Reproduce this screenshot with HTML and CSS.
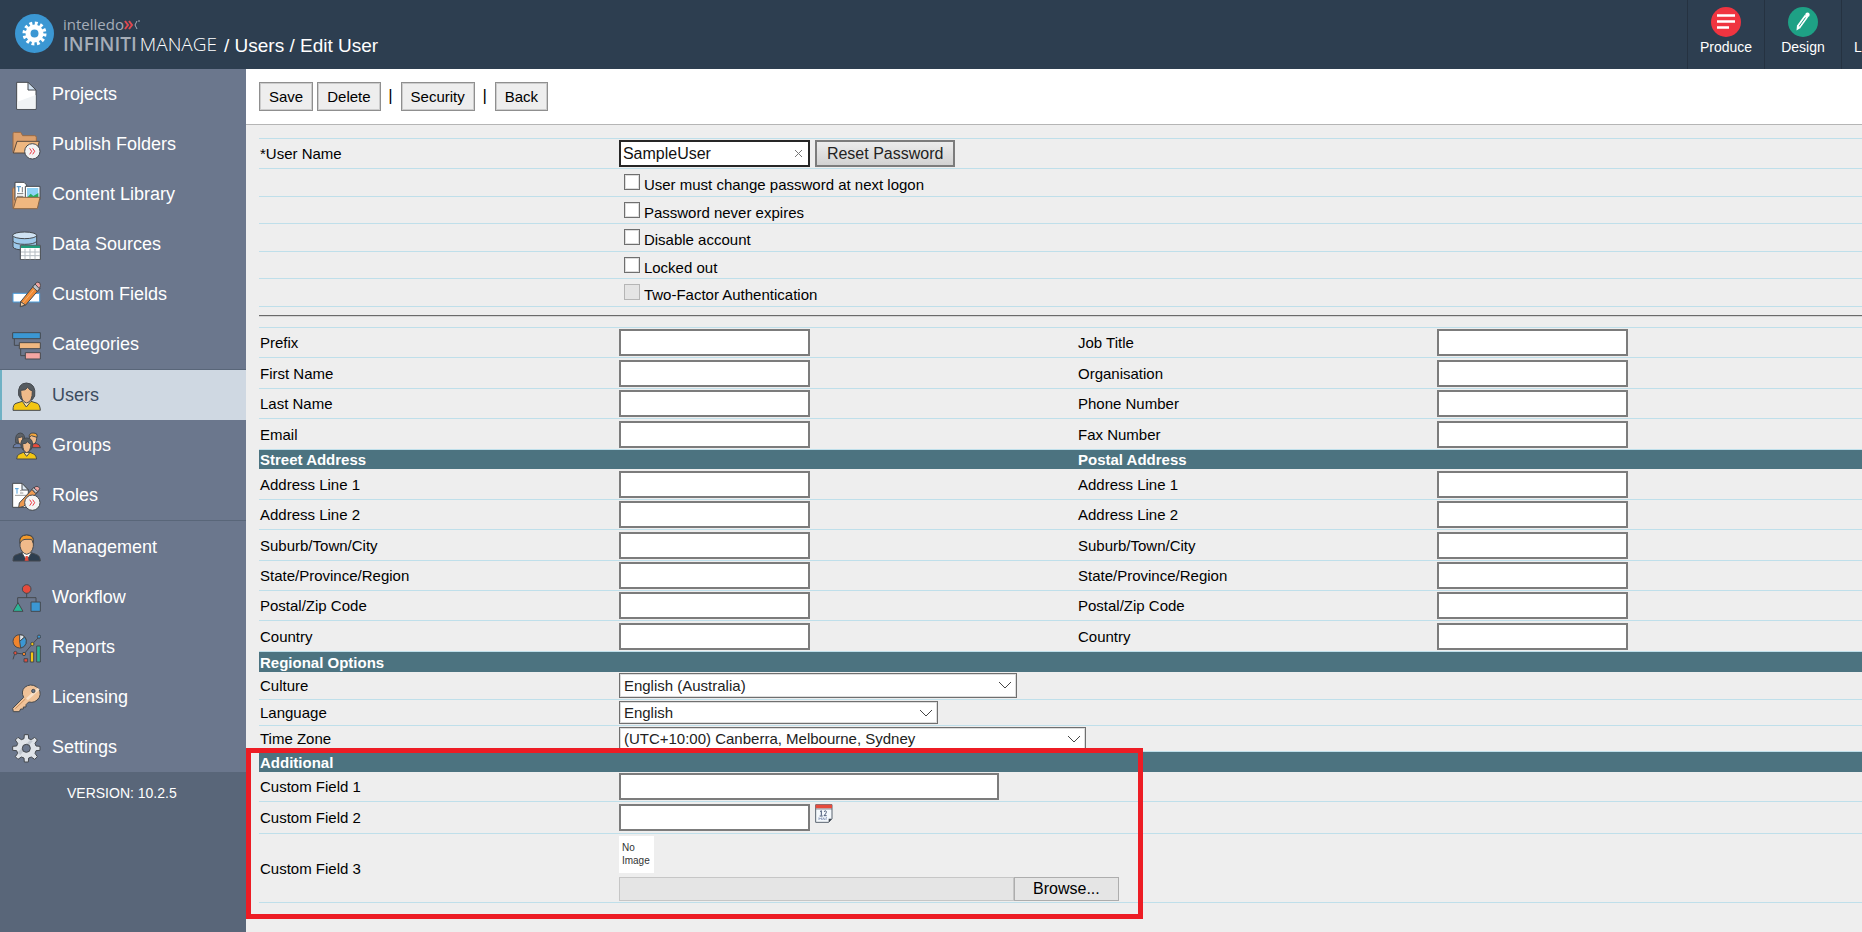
FILE: index.html
```html
<!DOCTYPE html>
<html lang="en">
<head>
    <meta charset="utf-8">
    <title>Edit User</title>
    <link rel="stylesheet" href="styles.css">
</head>
<body>
    <header class="topbar">
        <svg class="brand-icon" viewBox="0 0 39 39">
            <circle cx="19.5" cy="19.5" r="19.5" fill="#3b97d3"/>
            <circle cx="19.5" cy="19.5" r="10" fill="none" stroke="#fff" stroke-width="4" stroke-dasharray="2.8 2.436"/>
            <circle cx="19.5" cy="19.5" r="6.5" fill="none" stroke="#fff" stroke-width="5"/>
        </svg>
        <div class="brand">
            <div class="brand-top">intelledo<svg class="brand-x" viewBox="0 0 16 10">
                <path d="M1 1l3 4-3 4M5 1l3 4-3 4" fill="none" stroke="#e0494f" stroke-width="2"/>
                <path d="M13 1l-2 4 2 4M14 1h2" fill="none" stroke="#a5adb8"/>
            </svg></div>
            <div class="brand-name"><b>INFINITI</b><span>MANAGE</span></div>
        </div>
        <div class="crumbs">/ <a href="#">Users</a> / Edit User</div>
        <nav class="apps">
            <a href="#">
                <svg viewBox="0 0 30 30">
                    <circle cx="15" cy="15" r="15" fill="#f03440"/>
                    <path d="M6 8.5h18M6 14.500h18M6 20.500h12" stroke="#fff" stroke-width="2.700"/>
                </svg>
                Produce
            </a>
            <a href="#">
                <svg viewBox="0 0 30 30">
                    <circle cx="15" cy="15" r="15" fill="#1ea185"/>
                    <path d="M10.500 20L18.500 9" stroke="#fff" stroke-width="4"/>
                    <path d="M11 19.500L17.500 10.500" stroke="#1ea185" stroke-width="1"/>
                    <path d="M9 18L8.500 23.500L12.500 21Z" fill="#fff"/>
                    <circle cx="19.500" cy="7.800" r="2.200" fill="#fff"/>
                </svg>
                Design
            </a>
            <a href="#" class="last">L</a>
        </nav>
    </header>

    <div class="layout">
        <aside class="sidebar">
            <nav>
                <ul>
                    <li><a href="#">
                        <svg viewBox="0 0 87 87"><path d="M14 4H48L72 27V85H14Z" fill="#fff"/><path d="M16 62L71 42V83H16Z" fill="#f0f3f5" stroke="none"/><path d="M48 4V27H72Z" fill="#d3e3f3"/></svg>
                        Projects</a></li>
                    <li><a href="#">
                        <svg viewBox="0 0 87 87"><path d="M3 65V8q0-4 4-4H26L32 14H68q5 0 5 5V62Z" fill="#dca06d" stroke="#9c6b45"/><path d="M15 31H82L72 66H4Z" fill="#efb780" stroke="#5b4a3e"/><circle cx="61" cy="61" r="23" fill="#f3f3f3"/><path d="M53 52l6 9-6 9M62 52l6 9-6 9" fill="none" stroke="#f03440"/></svg>
                        Publish Folders</a></li>
                    <li><a href="#">
                        <svg viewBox="0 0 87 87"><path d="M2 24Q2 19 10 20V78L3 82Z" fill="#dca06d" stroke="#9c6b45"/><path d="M9 4H36L44 12V58H9Z" fill="#fff"/><path d="M14 17H27M20 17V32" stroke="#5d9fd0" stroke-width="4"/><path d="M15 38H34M15 46H34M31 18V34" stroke="#777"/><path d="M40 16H84V56H40Z" fill="#fff"/><path d="M45 21H79V48H45Z" fill="#8ed2f5" stroke="none"/><path d="M45 50L56 38L64 45L79 36V50Z" fill="#27ae60" stroke="none"/><path d="M14 49H84L76 83H4Z" fill="#efb780" stroke="#8a6544"/></svg>
                        Content Library</a></li>
                    <li><a href="#">
                        <svg viewBox="0 0 87 87"><path d="M3 13V48Q8 57 38 57Q68 57 74 48V13Z" fill="#9dc9ea"/><path d="M3 31Q10 40 38 40Q66 40 74 31" fill="none"/><ellipse cx="38" cy="13" rx="36" ry="10" fill="#cfe2f2"/><path d="M25 43H85V86H25Z" fill="#fff"/><path d="M27 44H84V51H27Z" fill="#1e9e7c" stroke="none"/><path d="M27 63H84M27 74H84M39 53V85M54 53V85M69 53V85" stroke="#b5bcc2"/></svg>
                        Data Sources</a></li>
                    <li><a href="#">
                        <svg viewBox="0 0 87 87"><path d="M3 37H83V63H3Z" fill="#fff" stroke="#4a9ddb"/><path d="M26 62L67 12L82 24L41 72L25 77Z" fill="#ee8a35"/><path d="M32 67L72 19" stroke="#f8b16e"/><path d="M26 62L25 77L40 72Z" fill="#efc79b"/><path d="M62 18L69 9L85 21L76 31Z" fill="#bfc5cb"/><path d="M69 9Q75 0 83 5Q89 13 82 23Z" fill="#f0a3a0"/></svg>
                        Custom Fields</a></li>
                    <li><a href="#">
                        <svg viewBox="0 0 87 87"><path d="M7 22V43H22M26 53V74H40" fill="none"/><path d="M2 5H85V23H2Z" fill="#3b97d3"/><path d="M22 35H85V53H22Z" fill="#efb780"/><path d="M40 65H85V84H40Z" fill="#f4a6a2"/></svg>
                        Categories</a></li>
                    <li class="active"><a href="#">
                        <svg viewBox="0 0 87 87"><path d="M3 85Q3 66 12 64L31 58H57L76 64Q84 68 85 85Z" fill="#f3c613"/><path d="M31 58L43 75L57 58V48H31Z" fill="#f8e3b0"/><path d="M20 40Q16 4 43 3Q73 4 68 42L61 53H28Z" fill="#555b60"/><path d="M26 25Q42 26 47 16Q53 26 61 26Q62 59 44 63Q26 59 26 25Z" fill="#f0ba8a"/></svg>
                        Users</a></li>
                    <li><a href="#">
                        <svg viewBox="0 0 87 87"><path d="M3 47Q4 36 13 35H35V47Z" fill="#6c7fa8"/><path d="M52 47V35H74Q84 37 85 47Z" fill="#e64b3c"/><path d="M11 32Q8 4 25 3Q41 3 38 35Z" fill="#5d6167"/><path d="M18 16Q26 18 32 13Q34 35 25 37Q17 34 18 16Z" fill="#f0ba8a"/><path d="M52 10Q60 1 74 6Q76 35 64 36Q53 34 52 10Z" fill="#f0ba8a"/><path d="M52 16Q50 3 63 3Q78 3 75 16L58 11Z" fill="#f4a53a"/><path d="M14 81Q14 68 23 66L34 61H54L65 66Q73 69 74 81Z" fill="#f3c613"/><path d="M35 61L44 73L54 61Z" fill="#f8e3b0"/><path d="M27 43Q24 18 44 18Q64 18 62 43L56 54H33Z" fill="#555b60"/><path d="M32 35Q43 36 47 29Q51 36 57 36Q56 59 44 62Q32 59 32 35Z" fill="#f0ba8a"/></svg>
                        Groups</a></li>
                    <li><a href="#">
                        <svg viewBox="0 0 87 87"><path d="M2 4H30L49 23V76H2Z" fill="#fff"/><path d="M30 4V24H49Z" fill="#dce8f3"/><path d="M9 20H20M15 20V35" stroke="#4a9ddb"/><path d="M9 40H45M24 26H30M24 33H34" stroke="#999"/><path d="M22 63L65 17L78 29L35 73L20 77Z" fill="#ee9a50"/><path d="M60 22L72 13Q80 12 83 19L79 29L71 34Z" fill="#f0a3a0"/><path d="M60 22L65 17L78 29L71 34Z" fill="#bfc5cb"/><circle cx="61" cy="62" r="23" fill="#f3f3f3"/><path d="M53 53l6 9-6 9M62 53l6 9-6 9" fill="none" stroke="#f03440"/></svg>
                        Roles</a></li>
                </ul>
                <ul class="admin">
                    <li><a href="#">
                        <svg viewBox="0 0 87 87"><path d="M3 81Q3 63 14 62L30 56H58L74 62Q84 65 85 81Z" fill="#2d3e50"/><path d="M30 57L44 80L58 57L53 49H35Z" fill="#fff"/><path d="M41 66H47L50 80H38Z" fill="#e64b3c" stroke="none"/><path d="M24 20Q22 3 45 3Q66 3 64 20V37Q61 57 44 61Q28 57 24 37Z" fill="#f0ba8a"/><path d="M24 28Q20 4 44 3Q68 4 64 28L59 16H42Q29 16 24 28Z" fill="#f49a2a"/></svg>
                        Management</a></li>
                    <li><a href="#">
                        <svg viewBox="0 0 87 87"><path d="M44 26V41M17 58V41H72V58" fill="none"/><circle cx="44" cy="15" r="13" fill="#e64b3c"/><path d="M18 56L33 82H3Z" fill="#2bb596"/><path d="M57 54H85V82H57Z" fill="#3b97d3"/></svg>
                        Workflow</a></li>
                    <li><a href="#">
                        <svg viewBox="0 0 87 87"><circle cx="23" cy="22" r="20" fill="#f0842c"/><path d="M23 2A20 20 0 0 1 38 9L23 22Z" fill="#dfe5ea"/><path d="M23 22L38 9A20 20 0 0 1 26 42Z" fill="#3b97d3"/><path d="M3 76L9 57L36 60L61 30L81 9" fill="none"/><circle cx="10" cy="57" r="5" fill="#e64b3c"/><circle cx="36" cy="60" r="5" fill="#f0842c"/><circle cx="61" cy="30" r="5" fill="#f3c613"/><circle cx="81" cy="8" r="5" fill="#3b97d3"/><path d="M36 74H47V84H36Z" fill="#e64b3c"/><path d="M55 54H65V84H55Z" fill="#f3c613"/><path d="M74 36H85V84H74Z" fill="#2bb596"/></svg>
                        Reports</a></li>
                    <li><a href="#">
                        <svg viewBox="0 0 87 87"><path d="M35 40Q26 23 38 10Q55-3 73 8Q90 22 82 40Q70 59 50 54L42 62V69H34V75H26L22 83H4L2 73Z" fill="#f0c298"/><path d="M10 74L40 45" stroke="#c98f5e"/><path d="M45 46L80 14" stroke="#f9e0c7" stroke-width="8"/><circle cx="64" cy="21" r="5" fill="#6b778d"/></svg>
                        Licensing</a></li>
                    <li><a href="#">
                        <svg viewBox="0 0 87 87"><path d="M36 14L37 2H49L50 14L58 17L68 10L76 18L69 28L72 36L84 37V49L72 50L69 58L76 68L68 76L58 69L50 72L49 84H37L36 72L28 69L18 76L10 68L17 58L14 50L2 49V37L14 36L17 28L10 18L18 10L28 17Z" fill="#dfe3e8"/><path d="M18 54L55 18L62 22L24 64Z" fill="#c3c9d1" stroke="none"/><circle cx="43" cy="43" r="12" fill="#6b778d"/></svg>
                        Settings</a></li>
                </ul>
            </nav>
            <div class="version">VERSION: 10.2.5</div>
        </aside>

        <main class="content">
            <div class="toolbar">
                <button type="button">Save</button>
                <button type="button">Delete</button>
                <span class="sep">|</span>
                <button type="button">Security</button>
                <span class="sep">|</span>
                <button type="button">Back</button>
            </div>

            <form class="user-form">
                <section class="account">
                    <div class="row">
                        <label for="username">*User Name</label>
                        <div class="field">
                            <div class="clearable">
                                <input type="text" id="username" class="focused" value="SampleUser">
                                <button type="button" class="clear" aria-label="Clear"><svg viewBox="0 0 9 9"><path d="M1 1L8 8M8 1L1 8" stroke="#777" fill="none"/></svg></button>
                            </div>
                            <button type="button" class="reset">Reset Password</button>
                        </div>
                    </div>
                    <div class="row check"><label><input type="checkbox"><span>User must change password at next logon</span></label></div>
                    <div class="row check"><label><input type="checkbox"><span>Password never expires</span></label></div>
                    <div class="row check"><label><input type="checkbox"><span>Disable account</span></label></div>
                    <div class="row check"><label><input type="checkbox"><span>Locked out</span></label></div>
                    <div class="row check"><label><input type="checkbox" disabled><span>Two-Factor Authentication</span></label></div>
                </section>

                <hr>

                <section class="details">
                    <div class="row">
                        <label for="prefix">Prefix</label><input type="text" id="prefix">
                        <label for="job">Job Title</label><input type="text" id="job">
                    </div>
                    <div class="row">
                        <label for="first">First Name</label><input type="text" id="first">
                        <label for="org">Organisation</label><input type="text" id="org">
                    </div>
                    <div class="row">
                        <label for="lastname">Last Name</label><input type="text" id="lastname">
                        <label for="phone">Phone Number</label><input type="text" id="phone">
                    </div>
                    <div class="row">
                        <label for="email">Email</label><input type="text" id="email">
                        <label for="fax">Fax Number</label><input type="text" id="fax">
                    </div>
                </section>

                <section class="address">
                    <div class="heading"><h2>Street Address</h2><h2>Postal Address</h2></div>
                    <div class="row">
                        <label for="s1">Address Line 1</label><input type="text" id="s1">
                        <label for="p1">Address Line 1</label><input type="text" id="p1">
                    </div>
                    <div class="row">
                        <label for="s2">Address Line 2</label><input type="text" id="s2">
                        <label for="p2">Address Line 2</label><input type="text" id="p2">
                    </div>
                    <div class="row">
                        <label for="s3">Suburb/Town/City</label><input type="text" id="s3">
                        <label for="p3">Suburb/Town/City</label><input type="text" id="p3">
                    </div>
                    <div class="row">
                        <label for="s4">State/Province/Region</label><input type="text" id="s4">
                        <label for="p4">State/Province/Region</label><input type="text" id="p4">
                    </div>
                    <div class="row">
                        <label for="s5">Postal/Zip Code</label><input type="text" id="s5">
                        <label for="p5">Postal/Zip Code</label><input type="text" id="p5">
                    </div>
                    <div class="row">
                        <label for="s6">Country</label><input type="text" id="s6">
                        <label for="p6">Country</label><input type="text" id="p6">
                    </div>
                </section>

                <section class="regional">
                    <div class="heading"><h2>Regional Options</h2></div>
                    <div class="row culture">
                        <label for="culture">Culture</label>
                        <div class="select">
                            <select id="culture"><option>English (Australia)</option></select>
                            <svg viewBox="0 0 14 8"><path d="M1 1L7 7L13 1"/></svg>
                        </div>
                    </div>
                    <div class="row language">
                        <label for="language">Language</label>
                        <div class="select">
                            <select id="language"><option>English</option></select>
                            <svg viewBox="0 0 14 8"><path d="M1 1L7 7L13 1"/></svg>
                        </div>
                    </div>
                    <div class="row timezone">
                        <label for="timezone">Time Zone</label>
                        <div class="select">
                            <select id="timezone"><option>(UTC+10:00) Canberra, Melbourne, Sydney</option></select>
                            <svg viewBox="0 0 14 8"><path d="M1 1L7 7L13 1"/></svg>
                        </div>
                    </div>
                </section>

                <section class="additional">
                    <div class="heading"><h2>Additional</h2></div>
                    <div class="row">
                        <label for="cf1">Custom Field 1</label><input type="text" id="cf1" class="wide">
                    </div>
                    <div class="row date">
                        <label for="cf2">Custom Field 2</label>
                        <div class="field">
                            <input type="text" id="cf2">
                            <button type="button" class="calendar" aria-label="Pick a date"><svg viewBox="0 0 54 57"><path d="M2 2H51V44L41 55H2Z" fill="#f4f8fc" stroke="#5a6470" stroke-width="3"/><path d="M2 2H51V13H2Z" fill="#e64b3c"/><path d="M2 15H51" stroke="#5a6470" stroke-width="2"/><path d="M15 23L19 20V35M14 36H23M27 23Q34 17 34 25Q33 29 27 35H35" fill="none" stroke="#4a5a78" stroke-width="3"/><path d="M12 48V41L16 45L20 41V48M23 48L26 41L29 48M33 48V41H36" fill="none" stroke="#6a7fa8" stroke-width="2"/><path d="M41 55V44H51Z" fill="#3c444d"/></svg></button>
                        </div>
                    </div>
                    <div class="row image">
                        <label for="cf3">Custom Field 3</label>
                        <div>
                            <div class="no-image">No<br>Image</div>
                            <div class="file">
                                <input type="text" id="cf3" disabled>
                                <button type="button">Browse...</button>
                            </div>
                        </div>
                    </div>
                    <div class="highlight"></div>
                </section>
            </form>
        </main>
    </div>
</body>
</html>
```
FILE: styles.css
```css
* {
    box-sizing: border-box;
}

body {
    margin: 0;
    min-height: 100vh;
    display: flex;
    flex-direction: column;
    background-color: #eee;
    color: #000;
    font-family: Arial, "Liberation Sans", sans-serif;
    font-size: 15px;
}

button,
input,
select {
    margin: 0;
    font-family: inherit;
}

/* top bar */
.topbar {
    display: flex;
    align-items: flex-start;
    height: 69px;
    padding: 14px 0 0 15px;
    background-color: #2d3e50;
    color: #fff;
}

.brand-icon {
    width: 39px;
    height: 39px;
}

.brand {
    width: 161px;
    margin-left: 9px;
    color: #a5adb8;
    font-family: "Open Sans", sans-serif;
    line-height: 21px;
}

.brand-top {
    font-size: 15px;
    line-height: 20px;
}

.brand-x {
    width: 16px;
    height: 10px;
}

.brand-name {
    display: flex;
    gap: 3px;
    font-size: 19px;
}

.brand-name b {
    font-weight: 600;
}

.brand-name span {
    color: #fff;
    font-weight: 300;
}

.crumbs {
    margin-top: 21px;
    font-size: 19px;
    line-height: 21px;
}

.crumbs a {
    color: #fff;
    text-decoration: none;
}

.apps {
    display: flex;
    align-self: stretch;
    margin: -14px 0 0 auto;
}

.apps a {
    display: flex;
    flex-direction: column;
    align-items: center;
    width: 77px;
    padding-top: 7px;
    border-left: 1px solid #253241;
    color: #fff;
    font-size: 14px;
    line-height: 20px;
    text-decoration: none;
}

.apps svg {
    width: 30px;
    height: 30px;
}

.apps .last {
    width: 21px;
    padding: 37px 0 0 12px;
    align-items: flex-start;
}

.layout {
    flex: 1;
    display: flex;
}

/* sidebar */
.sidebar {
    width: 246px;
    flex-shrink: 0;
    background-color: #596679;
}

.sidebar ul {
    list-style-type: none;
    margin: 0;
    padding: 0;
    background-color: #6b778d;
}

.sidebar .admin {
    padding-top: 1px;
    border-top: 1px solid #596679;
}

.sidebar a {
    display: flex;
    align-items: center;
    gap: 11px;
    height: 50px;
    padding-left: 12px;
    color: #fff;
    font-size: 18px;
    text-decoration: none;
}

.sidebar svg {
    width: 29px;
    height: 29px;
    margin-top: 2px;
    stroke: #45494e;
    stroke-width: 3px;
}

.sidebar .active {
    border-top: 1px solid #596679;
}

.sidebar .active a {
    padding-left: 10px;
    border-left: 2px solid #6fb1c4;
    background-color: #cfd8e2;
    color: #3c4b5e;
}

.version {
    padding: 11px 0 0 67px;
    color: #fff;
    font-size: 14px;
    line-height: 20px;
}

/* content */
.content {
    flex: 1;
    min-width: 0;
    overflow: hidden;
}

.toolbar {
    display: flex;
    align-items: flex-start;
    gap: 4px;
    height: 56px;
    padding: 13px 13px 0;
    background-color: #fff;
    border-bottom: 1px solid #b5b5b5;
}

.toolbar button {
    height: 29px;
    padding: 0 9px;
    background-color: #eee;
    border: 1px solid #8f8f8f;
    border-radius: 0;
    box-shadow: inset 0 0 0 1px #ccc;
    font-size: 15px;
}

.sep {
    width: 12px;
    font-size: 17px;
    line-height: 28px;
    text-align: center;
}

.user-form {
    margin: 13px -33px 0 13px;
}

.row,
.heading {
    display: grid;
    grid-template-columns: 22% 28% 22% 28%;
    align-items: center;
}

.row {
    height: 31px;
    border-bottom: 1px solid #bfdfea;
}

.row > label,
.heading h2 {
    padding-left: 1px;
}

.account,
.details {
    border-top: 1px solid #bfdfea;
}

.account .row:first-child,
.details .row:nth-child(odd),
.address .row:nth-child(3),
.address .row:nth-child(5),
.address .row:nth-child(6) {
    height: 30px;
}

.heading {
    height: 20px;
    background-color: #4c7380;
    color: #fff;
}

.address .heading {
    height: 19px;
}

.heading h2 {
    grid-column: span 2;
    margin: 0;
    font-size: 15px;
    line-height: 19px;
}

.field {
    display: flex;
    gap: 5px;
}

input[type="text"] {
    width: 191px;
    height: 27px;
    padding: 0 2px;
    background-color: #fff;
    border: 2px solid #7c7c7c;
    border-radius: 0;
    outline: none;
    color: #111;
    font-size: 16px;
}

input.focused {
    border-color: #262626;
}

input.wide {
    width: 380px;
}

.clearable {
    position: relative;
}

.clearable .clear {
    position: absolute;
    top: 9px;
    right: 7px;
    padding: 0;
    border: none;
    background: none;
    line-height: 0;
}

.clear svg {
    width: 9px;
    height: 9px;
}

.reset {
    height: 27px;
    padding: 0 10px;
    background: linear-gradient(#ececec, #d2d2d2);
    border: 2px solid #7c7c7c;
    border-radius: 0;
    color: #222;
    font-size: 16px;
}

.row.check {
    height: 28px;
    align-items: start;
}

.row.check:nth-child(odd) {
    height: 27px;
}

.check label {
    grid-column: 2 / span 3;
    display: flex;
    gap: 4px;
    padding: 5px 0 0 5px;
}

.check span {
    padding-top: 2px;
    line-height: 17px;
}

.check input {
    appearance: none;
    width: 16px;
    height: 16px;
    background-color: #fff;
    border: 1px solid #6f6f6f;
    box-shadow: inset 0 0 0 1px #ddd;
}

.check input:disabled {
    background-color: #e4e4e4;
    border-color: #b5b5b5;
    box-shadow: none;
}

hr {
    height: 2px;
    margin: 8px 0 10px;
    border: none;
    border-top: 1px solid #6a6a6a;
    border-bottom: 1px solid #d5d5d5;
}

/* drop-downs */
.select {
    position: relative;
    width: 398px;
    height: 25px;
}

.select select {
    display: block;
    appearance: none;
    width: 100%;
    height: 100%;
    padding: 0 4px;
    background-color: #fff;
    border: 1px solid #6f6f6f;
    border-radius: 0;
    box-shadow: inset 0 0 0 1px #ddd;
    color: #222;
    font-size: 15px;
}

.select svg {
    position: absolute;
    top: 8px;
    right: 5px;
    width: 14px;
    height: 8px;
    fill: none;
    stroke: #444;
}

.row.culture {
    height: 28px;
}

.row.language,
.row.timezone {
    height: 26px;
}

.language .select {
    width: 319px;
    height: 23px;
}

.timezone .select {
    width: 467px;
    height: 23px;
}

/* custom fields */
.additional {
    position: relative;
}

.additional .row {
    height: 30px;
}

.additional .date {
    height: 32px;
}

.additional .image {
    height: 69px;
}

.calendar {
    align-self: flex-start;
    padding: 0;
    border: none;
    background: none;
    line-height: 0;
}

.calendar svg {
    width: 18px;
    height: 19px;
}

.no-image {
    width: 35px;
    height: 37px;
    margin-bottom: 4px;
    padding: 5px 3px;
    background-color: #fff;
    color: #333;
    font-size: 10px;
    line-height: 13px;
}

.file {
    display: flex;
    width: 500px;
}

.file input[type="text"] {
    flex: 1;
    height: 24px;
    background-color: #e5e5e5;
    border: 1px solid #c6c6c6;
}

.file button {
    width: 105px;
    height: 24px;
    padding: 0;
    background-color: #e5e5e5;
    border: 1px solid #adadad;
    border-radius: 0;
    font-size: 16px;
}

.highlight {
    position: absolute;
    top: -4px;
    left: -13px;
    bottom: -16px;
    width: 897px;
    border: 5px solid #ed1c24;
    pointer-events: none;
}
```
